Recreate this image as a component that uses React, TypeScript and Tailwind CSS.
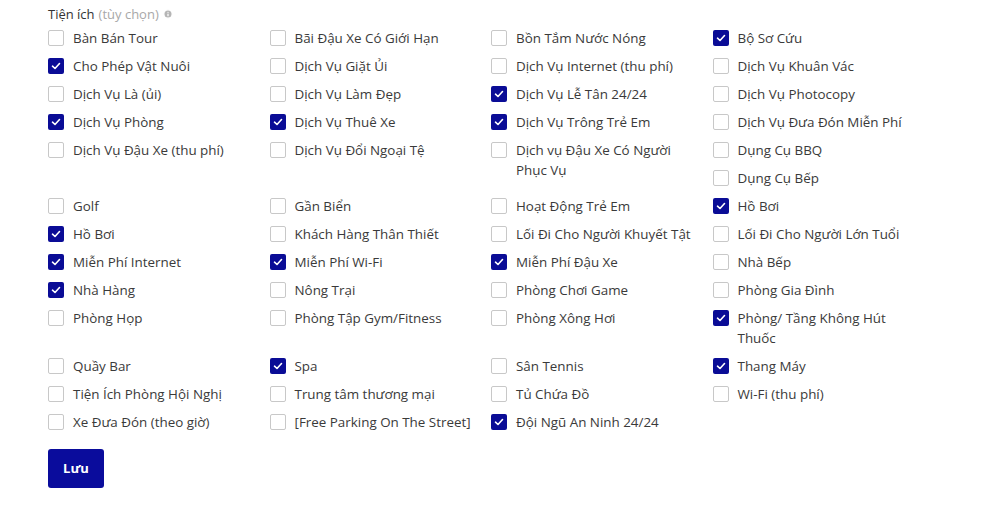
import { Info } from 'lucide-react';

type Item = { label: string; checked?: boolean; span?: boolean; col4?: boolean };

const items: Item[] = [
  { label: 'Bàn Bán Tour' },
  { label: 'Bãi Đậu Xe Có Giới Hạn' },
  { label: 'Bồn Tắm Nước Nóng' },
  { label: 'Bộ Sơ Cứu', checked: true },
  { label: 'Cho Phép Vật Nuôi', checked: true },
  { label: 'Dịch Vụ Giặt Ủi' },
  { label: 'Dịch Vụ Internet (thu phí)' },
  { label: 'Dịch Vụ Khuân Vác' },
  { label: 'Dịch Vụ Là (ủi)' },
  { label: 'Dịch Vụ Làm Đẹp' },
  { label: 'Dịch Vụ Lễ Tân 24/24', checked: true },
  { label: 'Dịch Vụ Photocopy' },
  { label: 'Dịch Vụ Phòng', checked: true },
  { label: 'Dịch Vụ Thuê Xe', checked: true },
  { label: 'Dịch Vụ Trông Trẻ Em', checked: true },
  { label: 'Dịch Vụ Đưa Đón Miễn Phí' },
  { label: 'Dịch Vụ Đậu Xe (thu phí)' },
  { label: 'Dịch Vụ Đổi Ngoại Tệ' },
  { label: 'Dịch vụ Đậu Xe Có Người Phục Vụ', span: true },
  { label: 'Dụng Cụ BBQ' },
  { label: 'Dụng Cụ Bếp', col4: true },
  { label: 'Golf' },
  { label: 'Gần Biển' },
  { label: 'Hoạt Động Trẻ Em' },
  { label: 'Hồ Bơi', checked: true },
  { label: 'Hồ Bơi', checked: true },
  { label: 'Khách Hàng Thân Thiết' },
  { label: 'Lối Đi Cho Người Khuyết Tật' },
  { label: 'Lối Đi Cho Người Lớn Tuổi' },
  { label: 'Miễn Phí Internet', checked: true },
  { label: 'Miễn Phí Wi-Fi', checked: true },
  { label: 'Miễn Phí Đậu Xe', checked: true },
  { label: 'Nhà Bếp' },
  { label: 'Nhà Hàng', checked: true },
  { label: 'Nông Trại' },
  { label: 'Phòng Chơi Game' },
  { label: 'Phòng Gia Đình' },
  { label: 'Phòng Họp' },
  { label: 'Phòng Tập Gym/Fitness' },
  { label: 'Phòng Xông Hơi' },
  { label: 'Phòng/ Tầng Không Hút Thuốc', checked: true },
  { label: 'Quầy Bar' },
  { label: 'Spa', checked: true },
  { label: 'Sân Tennis' },
  { label: 'Thang Máy', checked: true },
  { label: 'Tiện Ích Phòng Hội Nghị' },
  { label: 'Trung tâm thương mại' },
  { label: 'Tủ Chứa Đồ' },
  { label: 'Wi-Fi (thu phí)' },
  { label: 'Xe Đưa Đón (theo giờ)' },
  { label: '[Free Parking On The Street]' },
  { label: 'Đội Ngũ An Ninh 24/24', checked: true },
];

function Checkbox({ checked }: { checked?: boolean }) {
  if (checked) {
    return (
      <span className="mt-[2px] flex h-4 w-4 shrink-0 items-center justify-center rounded-[2px] bg-[#0a0c96]">
        <svg width="10" height="8" viewBox="0 0 10 8" fill="none">
          <path d="M1.5 4.2 L4 6.5 L8.5 1.5" stroke="white" strokeWidth="1.6" strokeLinecap="round" strokeLinejoin="round" />
        </svg>
      </span>
    );
  }
  return <span className="mt-[2px] h-4 w-4 shrink-0 rounded-[2px] border border-[#c8c8c8] bg-white" />;
}

export default function App() {
  return (
    <div className="min-h-[512px] w-[1005px] bg-white pl-12 pt-[4px] font-['Open_Sans',sans-serif] text-[#3a3a3a]">
      {/* Header */}
      <div className="mb-1 flex h-5 items-center gap-1 text-[13px] leading-5">
        <span className="text-[#333]">Tiện ích</span>
        <span className="text-[#a8a8a8]">(tùy chọn)</span>
        <Info className="h-[10px] w-[10px] fill-[#b5b5b5] text-white" strokeWidth={3} />
      </div>

      {/* Amenities */}
      <div className="grid w-[886px] grid-cols-4">
        {items.map((item, i) => (
          <label
            key={i}
            className={
              'flex items-start gap-[9px] pb-2 pr-2 text-[13.4px] leading-5' +
              (item.span ? ' row-span-2' : '') +
              (item.col4 ? ' col-start-4' : '')
            }
          >
            <Checkbox checked={item.checked} />
            <span>{item.label}</span>
          </label>
        ))}
      </div>

      <button className="mt-[9px] h-[39px] w-14 rounded-[3px] bg-[#0a0c9c] text-[13px] font-bold text-white">
        Lưu
      </button>
    </div>
  );
}
